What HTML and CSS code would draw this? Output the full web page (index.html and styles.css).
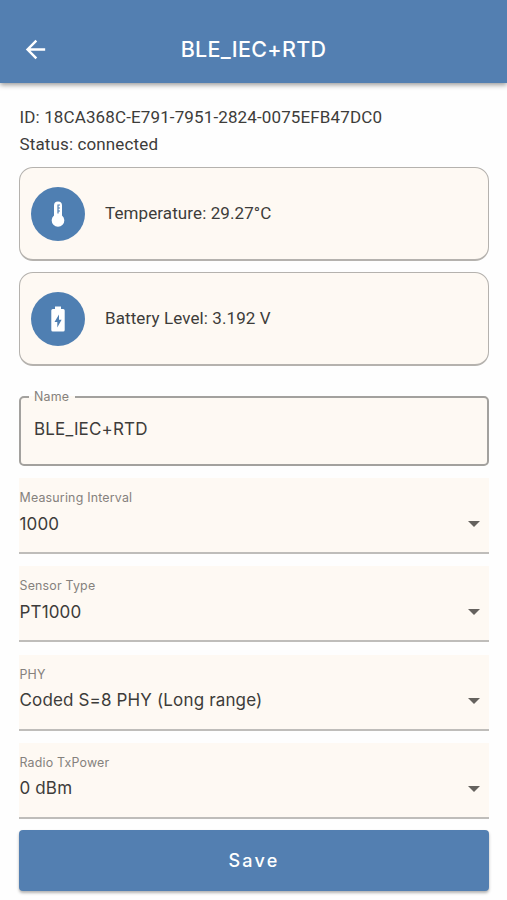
FILE: index.html
```html
<!DOCTYPE html>
<html lang="en">
<head>
    <meta charset="utf-8">
    <meta name="viewport" content="width=device-width, initial-scale=1">
    <title>BLE_IEC+RTD</title>
    <link rel="stylesheet" href="styles.css">
</head>
<body>
    <header class="topbar">
        <svg class="back" viewBox="0 0 24 24"><path d="M20 11H7.830l5.590-5.590L12 4l-8 8 8 8 1.410-1.410L7.830 13H20v-2z"/></svg>
        <h1 class="title">BLE_IEC+RTD</h1>
    </header>
    <main class="content">
        <div class="info">
            <div>ID: 18CA368C-E791-7951-2824-0075EFB47DC0</div>
            <div>Status: connected</div>
        </div>

        <!-- Readings -->
        <div class="card">
            <div class="badge">
                <svg viewBox="0 0 28 28">
                    <path fill="#fff" d="M14 1.500a4 4 0 0 0-4 4v10a6.300 6.300 0 1 0 8 0v-10a4 4 0 0 0-4-4z"/>
                    <path fill="none" stroke="#4f7fb2" stroke-width="1.200" d="M14 13.500V5h2M14 8h2M14 11h2"/>
                </svg>
            </div>
            <span class="reading">Temperature: 29.27°C</span>
        </div>
        <div class="card">
            <div class="badge">
                <svg viewBox="0 0 28 28">
                    <path fill="#fff" d="M11 1.500h6v2.500h2.200q1.500 0 1.500 1.500v19.500q0 1.500-1.500 1.500H8.800q-1.500 0-1.500-1.500V5.500q0-1.500 1.500-1.500H11z"/>
                    <path fill="#4f7fb2" d="M15 9.500l-4.500 7.500h2.800v5.500l4.300-7.800H15z"/>
                </svg>
            </div>
            <span class="reading">Battery Level: 3.192 V</span>
        </div>

        <!-- Settings -->
        <fieldset class="name-field">
            <legend>Name</legend>
            <span class="value">BLE_IEC+RTD</span>
        </fieldset>
        <div class="select">
            <div class="label">Measuring Interval</div>
            <div class="row"><span class="value">1000</span><i class="caret"></i></div>
        </div>
        <div class="select">
            <div class="label">Sensor Type</div>
            <div class="row"><span class="value">PT1000</span><i class="caret"></i></div>
        </div>
        <div class="select">
            <div class="label">PHY</div>
            <div class="row"><span class="value">Coded S=8 PHY (Long range)</span><i class="caret"></i></div>
        </div>
        <div class="select">
            <div class="label">Radio TxPower</div>
            <div class="row"><span class="value">0 dBm</span><i class="caret"></i></div>
        </div>
        <button class="save">Save</button>
    </main>
</body>
</html>
```
FILE: styles.css
```css
* {
    box-sizing: border-box;
}
body {
    margin: 0;
    height: 900px;
    overflow: hidden;
    background: #fefefe;
    color: #3d3c3a;
    font-family: Roboto, sans-serif;
    font-size: 17px;
}
.topbar {
    display: grid;
    grid-template-columns: 70px 1fr 70px;
    align-items: center;
    height: 83px;
    padding-top: 15px;
    background: #537fb1;
    color: #fff;
    box-shadow: 0 2px 5px rgba(0, 0, 0, 0.4);
}
.back {
    width: 29px;
    height: 29px;
    margin-left: 21px;
    fill: #fff;
}
.title {
    margin: 0;
    text-align: center;
    font-family: Inter, sans-serif;
    font-size: 21.500px;
    font-weight: 500;
    letter-spacing: 0.300px;
}
.content {
    padding: 21px 18px 0 19px;
}
.info {
    line-height: 27px;
    margin-bottom: 9px;
    padding-left: 0.500px;
    letter-spacing: 0.130px;
}
.card {
    display: flex;
    align-items: center;
    height: 94px;
    margin-bottom: 11px;
    padding-left: 11px;
    border: 1.500px solid #b5b2ae;
    border-bottom-width: 2px;
    border-radius: 14px;
    background: #fef9f3;
}
.badge {
    display: flex;
    align-items: center;
    justify-content: center;
    width: 54px;
    height: 54px;
    margin-right: 20px;
    border-radius: 50%;
    background: #4f7fb2;
}
.badge svg {
    width: 28px;
    height: 28px;
}
.reading {
    padding-bottom: 1px;
    letter-spacing: 0.100px;
}
.name-field {
    height: 77px;
    margin: 23px 0 12px;
    padding: 14px 13px 0;
    border: 2px solid #a3a19e;
    border-radius: 5px;
    background: #fef9f3;
}
.name-field legend {
    height: 16px;
    margin-left: -5px;
    padding: 0 6px 0 5px;
    line-height: 16px;
}
.name-field legend,
.label {
    color: #85817d;
    font-family: Inter, sans-serif;
    font-size: 12.400px;
    letter-spacing: 0.200px;
}
.value {
    font-family: Inter, sans-serif;
    font-size: 17px;
    letter-spacing: 0.150px;
}
.select {
    height: 76px;
    margin-bottom: 12.300px;
    padding-top: 12px;
    border-bottom: 2px solid #bfbdba;
    background: #fef9f3;
}
.label {
    padding-left: 0.500px;
    line-height: 16px;
}
.row {
    display: flex;
    align-items: center;
    justify-content: space-between;
    height: 36px;
    padding-left: 0.500px;
    padding-right: 9px;
}
.row .value {
    padding-bottom: 1px;
}
.caret {
    border: 6px solid transparent;
    border-top-color: #65625e;
    border-bottom: 0;
}
.save {
    display: block;
    width: 100%;
    height: 61px;
    margin-top: -1px;
    border: 0;
    border-radius: 4px;
    background: #537fb1;
    color: #fff;
    font: 500 18px Inter, sans-serif;
    letter-spacing: 2.200px;
    box-shadow: 0 2px 3px rgba(0, 0, 0, 0.3);
}
```
